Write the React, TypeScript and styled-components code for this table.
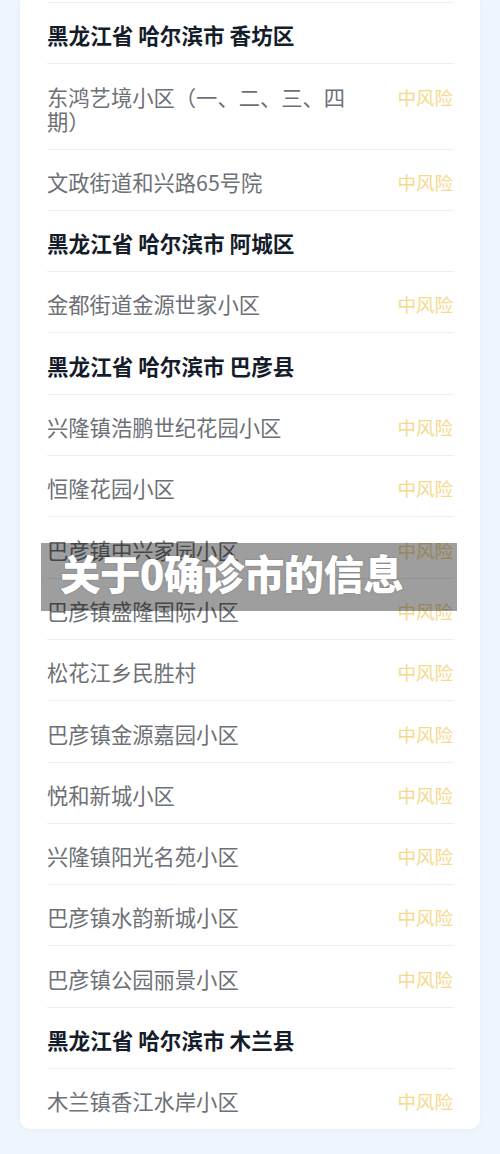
import React from 'react';
import styled, { createGlobalStyle } from 'styled-components';

const GlobalStyle = createGlobalStyle`
  html, body {
    margin: 0;
    padding: 0;
    background: #eef5fc;
  }
  * {
    box-sizing: border-box;
  }
`;

const S = {
  Page: styled.div`
    position: relative;
    width: 500px;
    height: 1154px;
    overflow: hidden;
    background: #eef5fc;
    font-family: 'Noto Sans CJK SC', 'Noto Sans', sans-serif;
  `,
  Card: styled.div`
    margin: 0 20px;
    padding: 2px 27px 0;
    background: #ffffff;
    border-radius: 0 0 10px 10px;
    box-shadow: 0 1px 4px rgba(120, 150, 190, 0.08);
  `,
  List: styled.div`
    display: flex;
    flex-direction: column;
    border-top: 1px solid #eceef1;
  `,
  Row: styled.div`
    display: flex;
    align-items: flex-start;
    justify-content: space-between;
    gap: 40px;
    padding: 20.3px 0 16px;
    border-bottom: 1px solid #eceef1;

    &:last-child {
      border-bottom: none;
    }
  `,
  Name: styled.div<{ $header?: boolean }>`
    flex: 1;
    font-size: ${(p) => (p.$header ? '21.6px' : '21.3px')};
    line-height: 24px;
    font-weight: ${(p) => (p.$header ? 700 : 400)};
    color: ${(p) => (p.$header ? '#151c2a' : '#6d7177')};
  `,
  Risk: styled.div`
    flex-shrink: 0;
    font-size: 18.5px;
    line-height: 24px;
    color: #f5d98c;
  `,
  Banner: styled.div`
    position: absolute;
    left: 41px;
    top: 543px;
    width: 416px;
    height: 68px;
    display: flex;
    align-items: center;
    padding: 0 0 8px 19px;
    background: rgba(0, 0, 0, 0.38);
  `,
  BannerText: styled.div`
    font-size: 40.5px;
    line-height: 44px;
    font-weight: 900;
    color: #ffffff;
    letter-spacing: -0.6px;
    text-shadow: 0 0 2px rgba(0, 0, 0, 0.25);
  `,
};

type Item = { name: string; header?: boolean };

const items: Item[] = [
  { name: '黑龙江省 哈尔滨市 香坊区', header: true },
  { name: '东鸿艺境小区（一、二、三、四期）' },
  { name: '文政街道和兴路65号院' },
  { name: '黑龙江省 哈尔滨市 阿城区', header: true },
  { name: '金都街道金源世家小区' },
  { name: '黑龙江省 哈尔滨市 巴彦县', header: true },
  { name: '兴隆镇浩鹏世纪花园小区' },
  { name: '恒隆花园小区' },
  { name: '巴彦镇中兴家园小区' },
  { name: '巴彦镇盛隆国际小区' },
  { name: '松花江乡民胜村' },
  { name: '巴彦镇金源嘉园小区' },
  { name: '悦和新城小区' },
  { name: '兴隆镇阳光名苑小区' },
  { name: '巴彦镇水韵新城小区' },
  { name: '巴彦镇公园丽景小区' },
  { name: '黑龙江省 哈尔滨市 木兰县', header: true },
  { name: '木兰镇香江水岸小区' },
];

function App() {
  return (
    <S.Page>
      <GlobalStyle />
      <S.Card>
        <S.List>
          {items.map((it, i) => (
            <S.Row key={i}>
              <S.Name $header={it.header}>{it.name}</S.Name>
              {!it.header && <S.Risk>中风险</S.Risk>}
            </S.Row>
          ))}
        </S.List>
      </S.Card>
      <S.Banner>
        <S.BannerText>关于0确诊市的信息</S.BannerText>
      </S.Banner>
    </S.Page>
  );
}

export default App;
